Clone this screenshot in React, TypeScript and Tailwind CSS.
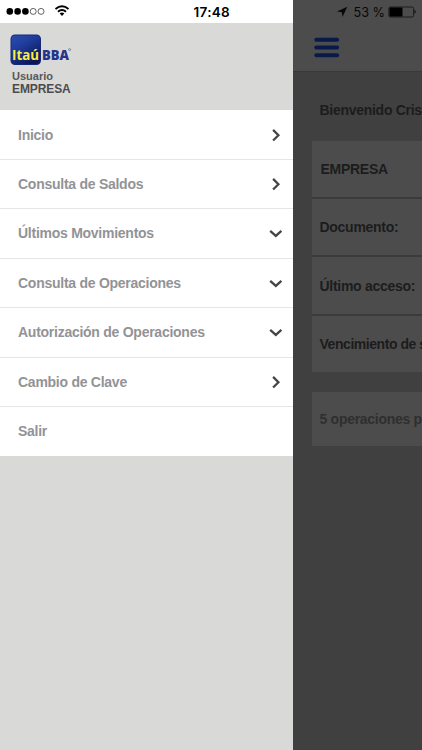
type Direction = 'right' | 'down' | 'none';

const menu: { label: string; direction: Direction; row: string }[] = [
  { label: 'Inicio', direction: 'right', row: 'h-[50px]' },
  { label: 'Consulta de Saldos', direction: 'right', row: 'h-[49px]' },
  { label: 'Últimos Movimientos', direction: 'down', row: 'h-[50px] pb-px' },
  { label: 'Consulta de Operaciones', direction: 'down', row: 'h-[49px]' },
  { label: 'Autorización de Operaciones', direction: 'down', row: 'h-[50px] pb-px' },
  { label: 'Cambio de Clave', direction: 'right', row: 'h-[49px]' },
  { label: 'Salir', direction: 'none', row: 'h-[49px] pb-px' },
];

function Chevron({ direction }: { direction: Direction }) {
  if (direction === 'none') return null;
  return (
    <svg className="h-[16px] w-[16px] shrink-0" viewBox="0 0 16 16" fill="none" stroke="#454547" strokeWidth="2.3">
      <path d={direction === 'right' ? 'M5.1 2.9 L10.4 8.2 L5.1 13.5' : 'M2.2 5.8 L7.8 10.9 L13.4 5.8'} />
    </svg>
  );
}

function Logo() {
  return (
    <svg className="block h-[32px] w-[62px]" viewBox="0 0 62 32" fontFamily="Open Sans, sans-serif">
      <defs>
        <linearGradient id="tile" x1="0" y1="0" x2="0.6" y2="1">
          <stop offset="0" stopColor="#2c4cab" />
          <stop offset="0.4" stopColor="#1f3d9e" />
          <stop offset="1" stopColor="#0d1659" />
        </linearGradient>
      </defs>
      <rect x="0.5" y="0.5" width="30.5" height="30.5" rx="4.5" fill="#132a7c" />
      <rect x="1.5" y="1.5" width="28.5" height="28.5" rx="3.5" fill="url(#tile)" />
      <text x="2" y="25.8" fontSize="14" fontWeight="700" fill="#f8ee42" textLength="27" lengthAdjust="spacingAndGlyphs">Itaú</text>
      <text x="32" y="25.6" fontSize="14" fontWeight="800" fill="#25358c" textLength="27" lengthAdjust="spacingAndGlyphs">BBA</text>
      <circle cx="59.6" cy="15.6" r="1" fill="none" stroke="#5463a0" strokeWidth="0.7" />
    </svg>
  );
}

function Drawer() {
  return (
    <aside className="flex h-full w-[292.5px] shrink-0 flex-col bg-[#d9d9d8]">
      <div className="flex h-[23px] shrink-0 items-center bg-white">
        <svg className="h-[23px] w-[193.5px]" viewBox="0 0 193.5 23">
          <g fill="#000">
            <circle cx="9.8" cy="11.4" r="3.3" />
            <circle cx="17.6" cy="11.4" r="3.3" />
            <circle cx="25.4" cy="11.4" r="3.3" />
          </g>
          <g fill="none" stroke="#222" strokeWidth="0.7">
            <circle cx="33.2" cy="11.4" r="3" />
            <circle cx="41" cy="11.4" r="3" />
          </g>
          <g fill="none" stroke="#000" strokeWidth="1.9">
            <path d="M55.5 9.1 Q62 3.6 68.5 9.1" />
            <path d="M58 11.8 Q62 8.3 66 11.8" />
          </g>
          <path d="M59.7 13.4 Q62 11.7 64.3 13.4 L62 15.9 Z" fill="#000" />
        </svg>
        <span className="pt-[2px] font-['Inter'] text-[13.5px] leading-none font-semibold tracking-[0.3px] text-black">17:48</span>
      </div>
      <header className="flex h-[87px] shrink-0 flex-col pt-[11px] pl-[10px]">
        <Logo />
        <div className="pt-[4px] pl-[2px] text-[11px] leading-[13px] font-bold text-[#58585a]">Usuario</div>
        <div className="pl-[2px] text-[12px] leading-[12px] font-bold tracking-[-0.1px] text-[#4c4c4e]">EMPRESA</div>
      </header>
      <nav className="flex h-[346px] shrink-0 flex-col bg-white">
        {menu.map((item) => (
          <a key={item.label} className={`${item.row} flex shrink-0 items-center justify-between border-b border-[#e6e6e7] pr-[9px] pl-[18px] last:border-b-0`}>
            <span className="text-[14px] leading-[18px] font-bold tracking-[-0.26px] text-[#929396]">{item.label}</span>
            <Chevron direction={item.direction} />
          </a>
        ))}
      </nav>
    </aside>
  );
}

function Page() {
  return (
    <main className="flex h-full min-w-0 flex-1 flex-col bg-[#404040]">
      <div className="h-[72px] shrink-0 border-b border-[#393939] bg-[#4c4c4c]">
        <svg className="block h-[71px] w-[129.5px]" viewBox="292.5 0 129.5 71">
          <path d="M336.5 11.6 L346.8 6.8 L342 17 L341.3 12.3 Z" fill="#080808" />
          <text x="353" y="16.7" fill="#080808" fontFamily="Inter, sans-serif" fontSize="13.5" textLength="31.5" lengthAdjust="spacingAndGlyphs">53 %</text>
          <rect x="388.4" y="7" width="24.7" height="10" rx="1.6" fill="none" stroke="#101010" strokeWidth="0.8" />
          <rect x="389" y="7.6" width="13" height="8.8" rx="0.7" fill="#000" />
          <path d="M414 9.8 Q416.4 11.8 414 14 Z" fill="#080808" />
          <g stroke="#071a4a" strokeWidth="4" strokeLinecap="round">
            <path d="M315.8 39.7 H336.6" />
            <path d="M315.8 47.4 H336.6" />
            <path d="M315.8 55.2 H336.6" />
          </g>
        </svg>
      </div>
      <div className="flex flex-col pl-[19px] text-[14px] leading-[18px] font-bold tracking-[-0.28px] whitespace-nowrap text-[#1c1c1d]">
        <p className="h-[69px] pt-[29px] pl-[8px]">Bienvenido Cris</p>
        <div className="flex flex-col gap-[2px] bg-[#3b3b3d]">
          <div className="flex h-[56px] items-center bg-[#4c4c4c] pl-[9px]">EMPRESA</div>
          <div className="flex h-[56px] items-center bg-[#4c4c4c] pl-[8px]">Documento:</div>
          <div className="flex h-[57px] items-center bg-[#4c4c4c] pl-[8px]">Último acceso:</div>
          <div className="flex h-[56px] items-center bg-[#4c4c4c] pl-[8px] tracking-[-0.45px]">Vencimiento de s</div>
        </div>
        <div className="mt-[20px] flex h-[54px] items-center bg-[#4c4c4c] pl-[8px] text-[#2f2f30]">5 operaciones p</div>
      </div>
    </main>
  );
}

export default function App() {
  return (
    <div className="flex h-[750px] w-[422px] overflow-hidden font-['Liberation_Sans',sans-serif]">
      <Drawer />
      <Page />
    </div>
  );
}
